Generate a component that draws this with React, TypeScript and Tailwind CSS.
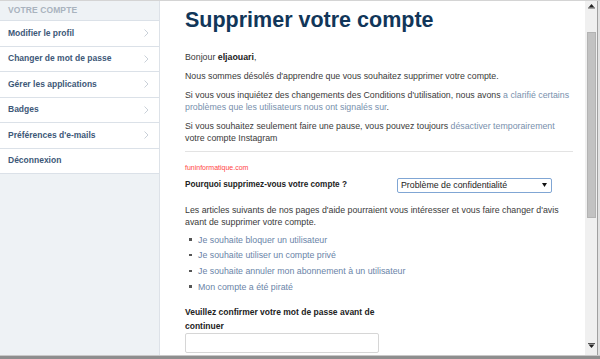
const menu = [
  { label: "Modifier le profil", chevron: true },
  { label: "Changer de mot de passe", chevron: true },
  { label: "Gérer les applications", chevron: true },
  { label: "Badges", chevron: true },
  { label: "Préférences d'e-mails", chevron: true },
  { label: "Déconnexion", chevron: false },
];

const helpLinks = [
  "Je souhaite bloquer un utilisateur",
  "Je souhaite utiliser un compte privé",
  "Je souhaite annuler mon abonnement à un utilisateur",
  "Mon compte a été piraté",
];

function Chevron() {
  return (
    <svg width="5" height="8" viewBox="0 0 5 8" className="shrink-0">
      <polyline points="0.5,0.5 4,4 0.5,7.5" fill="none" stroke="#c9d0d8" strokeWidth="1" />
    </svg>
  );
}

function Sidebar() {
  return (
    <aside className="w-[160px] shrink-0 bg-[#eef2f5] border-r border-[#dde2e8] flex flex-col">
      <div className="h-[19px] flex items-center px-[8px] text-[8.5px] font-bold uppercase text-[#a9b3be] tracking-[0.1px]">
        Votre compte
      </div>
      <div className="border-t border-[#dbe1e8]">
        {menu.map(({ label, chevron }) => (
          <div
            key={label}
            className="h-[25.5px] bg-white border-b border-[#dbe1e8] flex items-center justify-between pl-[8px] pr-[10px] text-[8.5px] font-bold text-[#3d5878]"
          >
            <span>{label}</span>
            {chevron && <Chevron />}
          </div>
        ))}
      </div>
    </aside>
  );
}

function Scrollbar() {
  return (
    <div className="w-[12px] shrink-0 bg-[#f0f0f0] flex flex-col items-center">
      <svg width="7" height="5" viewBox="0 0 7 5" className="mt-[3px]">
        <polygon points="3.5,0 6.5,3.5 0.5,3.5" fill="#222" />
        <rect x="0" y="3.5" width="7" height="1" fill="#555" />
      </svg>
      <div className="mt-[23px] w-[9px] h-[186px] bg-[#c2c2c2] border border-[#b3b3b3]" />
      <div className="flex-1" />
      <svg width="7" height="5" viewBox="0 0 7 5" className="mb-[7px]">
        <rect x="0" y="0" width="7" height="1" fill="#555" />
        <polygon points="0.5,1.5 6.5,1.5 3.5,5" fill="#222" />
      </svg>
    </div>
  );
}

function Main() {
  return (
    <main className="flex-1 bg-white pl-[25px] pt-[9px] text-[8.8px] leading-[12px] text-[#3a3a3a] overflow-hidden">
      <h1 className="text-[21.5px] leading-[21.5px] font-bold text-[#113659] whitespace-nowrap">
        Supprimer votre compte
      </h1>
      <p className="mt-[19px]">
        Bonjour <b className="text-[#222]">eljaouari</b>,
      </p>
      <p className="mt-[7px]">Nous sommes désolés d'apprendre que vous souhaitez supprimer votre compte.</p>
      <p className="mt-[7px]">
        Si vous vous inquiétez des changements des Conditions d'utilisation, nous avons{" "}
        <span className="text-[#7890ad]">a clarifié certains</span>
        <br />
        <span className="text-[#7890ad]">problèmes que les utilisateurs nous ont signalés sur</span>.
      </p>
      <p className="mt-[7px]">
        Si vous souhaitez seulement faire une pause, vous pouvez toujours{" "}
        <span className="text-[#7890ad]">désactiver temporairement</span>
        <br />
        votre compte Instagram
      </p>
      <div className="mt-[7px] w-[388px] border-t border-[#e3e3e3]" />
      <div className="mt-[11px] text-[7px] leading-[10px] text-[#ff4545]">funinformatique.com</div>
      <div className="mt-[5px] flex items-center">
        <div className="w-[212px] text-[8.2px] font-bold text-[#222]">Pourquoi supprimez-vous votre compte ?</div>
        <div className="w-[155px] h-[15px] border border-[#80a6d4] rounded-[2px] bg-white flex items-center justify-between pl-[3px] pr-[4px] text-[#222]">
          <span>Problème de confidentialité</span>
          <svg width="5" height="4" viewBox="0 0 5 4">
            <polygon points="0,0 5,0 2.5,4" fill="#111" />
          </svg>
        </div>
      </div>
      <p className="mt-[11px]">
        Les articles suivants de nos pages d'aide pourraient vous intéresser et vous faire changer d'avis
        <br />
        avant de supprimer votre compte.
      </p>
      <ul className="mt-[6px] flex flex-col gap-[3.7px]">
        {helpLinks.map((t) => (
          <li key={t} className="flex items-center pl-[4px]">
            <span className="w-[2.5px] h-[2.5px] bg-[#555] mr-[6.5px]" />
            <span className="text-[#6a84a8]">{t}</span>
          </li>
        ))}
      </ul>
      <div className="mt-[12px] text-[8.5px] leading-[14px] font-bold text-[#222]">
        Veuillez confirmer votre mot de passe avant de
        <br />
        continuer
      </div>
      <div className="w-[194px] h-[20px] border border-[#d6d6d6] rounded-[2px] bg-white" />
    </main>
  );
}

export default function App() {
  return (
    <div className="w-[600px] h-[359px] flex flex-col overflow-hidden bg-white font-['Liberation_Sans',Arial,sans-serif]">
      <div className="h-[1px] bg-[#d4d4d4]" />
      <div className="flex-1 flex min-h-0">
        <Sidebar />
        <Main />
        <Scrollbar />
        <div className="w-[1px] bg-[#a0a0a0]" />
        <div className="w-[2px] bg-[#e2e2e2]" />
      </div>
      <div className="h-[1px] bg-[#c8c8c8]" />
      <div className="h-[3px] bg-[#8e8e8e]" />
    </div>
  );
}
